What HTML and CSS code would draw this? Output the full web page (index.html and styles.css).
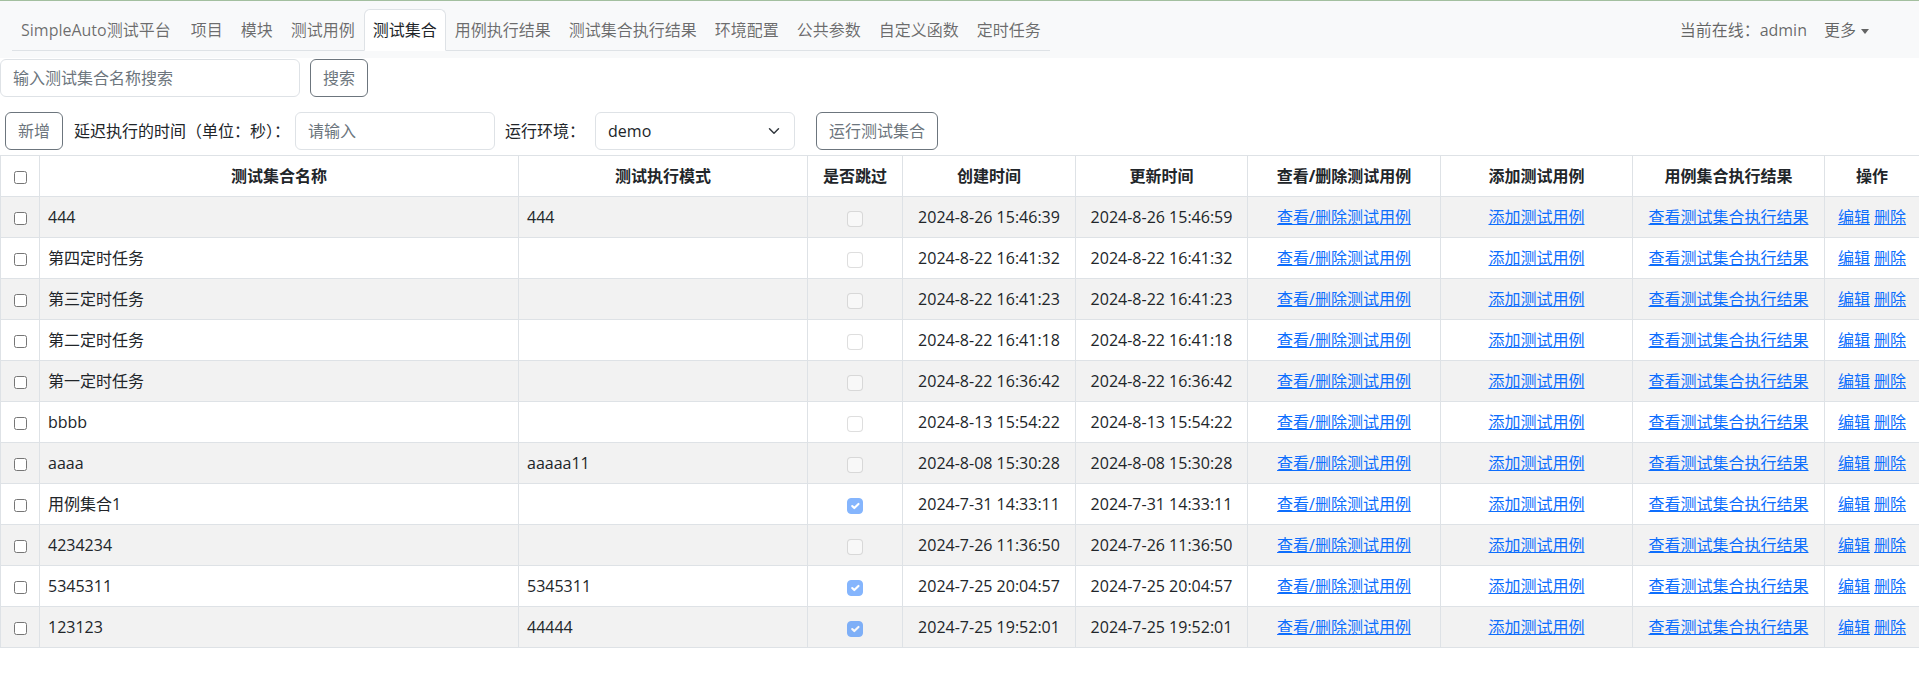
FILE: index.html
```html
<!DOCTYPE html>
<html lang="zh-CN">
<head>
<meta charset="utf-8">
<title>SimpleAuto测试平台</title>
<link rel="stylesheet" href="styles.css">
</head>
<body>
<nav class="navbar">
  <ul class="tabs">
    <li><a class="tab brand">SimpleAuto测试平台</a></li>
    <li><a class="tab">项目</a></li>
    <li><a class="tab">模块</a></li>
    <li><a class="tab">测试用例</a></li>
    <li><a class="tab active">测试集合</a></li>
    <li><a class="tab">用例执行结果</a></li>
    <li><a class="tab">测试集合执行结果</a></li>
    <li><a class="tab">环境配置</a></li>
    <li><a class="tab">公共参数</a></li>
    <li><a class="tab">自定义函数</a></li>
    <li><a class="tab">定时任务</a></li>
  </ul>
  <div class="nav-right">
    <span class="online">当前在线：admin</span>
    <a class="more">更多</a>
  </div>
</nav>

<div class="search-row">
  <input class="form-input search-input" type="text" placeholder="输入测试集合名称搜索">
  <button class="btn">搜索</button>
</div>

<div class="action-row">
  <button class="btn">新增</button>
  <span class="label label-delay">延迟执行的时间（单位：秒）：</span>
  <input class="form-input small-input" type="text" placeholder="请输入">
  <span class="label label-env">运行环境：</span>
  <select class="form-select"><option>demo</option></select>
  <button class="btn run-btn">运行测试集合</button>
</div>

<table class="grid">
  <colgroup>
    <col class="w-check">
    <col class="w-name">
    <col class="w-mode">
    <col class="w-skip">
    <col class="w-time">
    <col class="w-time2">
    <col class="w-view">
    <col class="w-add">
    <col class="w-result">
    <col class="w-op">
  </colgroup>
  <thead>
    <tr>
      <th><input type="checkbox" class="native-check"></th>
      <th>测试集合名称</th>
      <th>测试执行模式</th>
      <th>是否跳过</th>
      <th>创建时间</th>
      <th>更新时间</th>
      <th>查看/删除测试用例</th>
      <th>添加测试用例</th>
      <th>用例集合执行结果</th>
      <th>操作</th>
    </tr>
  </thead>
  <tbody>
    <tr>
      <td class="c"><input type="checkbox" class="native-check"></td>
      <td>444</td><td>444</td>
      <td class="c"><input type="checkbox" class="skip-check" disabled></td>
      <td class="c">2024-8-26 15:46:39</td><td class="c">2024-8-26 15:46:59</td>
      <td class="c"><a class="link">查看/删除测试用例</a></td>
      <td class="c"><a class="link">添加测试用例</a></td>
      <td class="c"><a class="link">查看测试集合执行结果</a></td>
      <td class="c"><a class="link">编辑</a> <a class="link">删除</a></td>
    </tr>
    <tr>
      <td class="c"><input type="checkbox" class="native-check"></td>
      <td>第四定时任务</td><td></td>
      <td class="c"><input type="checkbox" class="skip-check" disabled></td>
      <td class="c">2024-8-22 16:41:32</td><td class="c">2024-8-22 16:41:32</td>
      <td class="c"><a class="link">查看/删除测试用例</a></td>
      <td class="c"><a class="link">添加测试用例</a></td>
      <td class="c"><a class="link">查看测试集合执行结果</a></td>
      <td class="c"><a class="link">编辑</a> <a class="link">删除</a></td>
    </tr>
    <tr>
      <td class="c"><input type="checkbox" class="native-check"></td>
      <td>第三定时任务</td><td></td>
      <td class="c"><input type="checkbox" class="skip-check" disabled></td>
      <td class="c">2024-8-22 16:41:23</td><td class="c">2024-8-22 16:41:23</td>
      <td class="c"><a class="link">查看/删除测试用例</a></td>
      <td class="c"><a class="link">添加测试用例</a></td>
      <td class="c"><a class="link">查看测试集合执行结果</a></td>
      <td class="c"><a class="link">编辑</a> <a class="link">删除</a></td>
    </tr>
    <tr>
      <td class="c"><input type="checkbox" class="native-check"></td>
      <td>第二定时任务</td><td></td>
      <td class="c"><input type="checkbox" class="skip-check" disabled></td>
      <td class="c">2024-8-22 16:41:18</td><td class="c">2024-8-22 16:41:18</td>
      <td class="c"><a class="link">查看/删除测试用例</a></td>
      <td class="c"><a class="link">添加测试用例</a></td>
      <td class="c"><a class="link">查看测试集合执行结果</a></td>
      <td class="c"><a class="link">编辑</a> <a class="link">删除</a></td>
    </tr>
    <tr>
      <td class="c"><input type="checkbox" class="native-check"></td>
      <td>第一定时任务</td><td></td>
      <td class="c"><input type="checkbox" class="skip-check" disabled></td>
      <td class="c">2024-8-22 16:36:42</td><td class="c">2024-8-22 16:36:42</td>
      <td class="c"><a class="link">查看/删除测试用例</a></td>
      <td class="c"><a class="link">添加测试用例</a></td>
      <td class="c"><a class="link">查看测试集合执行结果</a></td>
      <td class="c"><a class="link">编辑</a> <a class="link">删除</a></td>
    </tr>
    <tr>
      <td class="c"><input type="checkbox" class="native-check"></td>
      <td>bbbb</td><td></td>
      <td class="c"><input type="checkbox" class="skip-check" disabled></td>
      <td class="c">2024-8-13 15:54:22</td><td class="c">2024-8-13 15:54:22</td>
      <td class="c"><a class="link">查看/删除测试用例</a></td>
      <td class="c"><a class="link">添加测试用例</a></td>
      <td class="c"><a class="link">查看测试集合执行结果</a></td>
      <td class="c"><a class="link">编辑</a> <a class="link">删除</a></td>
    </tr>
    <tr>
      <td class="c"><input type="checkbox" class="native-check"></td>
      <td>aaaa</td><td>aaaaa11</td>
      <td class="c"><input type="checkbox" class="skip-check" disabled></td>
      <td class="c">2024-8-08 15:30:28</td><td class="c">2024-8-08 15:30:28</td>
      <td class="c"><a class="link">查看/删除测试用例</a></td>
      <td class="c"><a class="link">添加测试用例</a></td>
      <td class="c"><a class="link">查看测试集合执行结果</a></td>
      <td class="c"><a class="link">编辑</a> <a class="link">删除</a></td>
    </tr>
    <tr>
      <td class="c"><input type="checkbox" class="native-check"></td>
      <td>用例集合1</td><td></td>
      <td class="c"><input type="checkbox" class="skip-check" checked disabled></td>
      <td class="c">2024-7-31 14:33:11</td><td class="c">2024-7-31 14:33:11</td>
      <td class="c"><a class="link">查看/删除测试用例</a></td>
      <td class="c"><a class="link">添加测试用例</a></td>
      <td class="c"><a class="link">查看测试集合执行结果</a></td>
      <td class="c"><a class="link">编辑</a> <a class="link">删除</a></td>
    </tr>
    <tr>
      <td class="c"><input type="checkbox" class="native-check"></td>
      <td>4234234</td><td></td>
      <td class="c"><input type="checkbox" class="skip-check" disabled></td>
      <td class="c">2024-7-26 11:36:50</td><td class="c">2024-7-26 11:36:50</td>
      <td class="c"><a class="link">查看/删除测试用例</a></td>
      <td class="c"><a class="link">添加测试用例</a></td>
      <td class="c"><a class="link">查看测试集合执行结果</a></td>
      <td class="c"><a class="link">编辑</a> <a class="link">删除</a></td>
    </tr>
    <tr>
      <td class="c"><input type="checkbox" class="native-check"></td>
      <td>5345311</td><td>5345311</td>
      <td class="c"><input type="checkbox" class="skip-check" checked disabled></td>
      <td class="c">2024-7-25 20:04:57</td><td class="c">2024-7-25 20:04:57</td>
      <td class="c"><a class="link">查看/删除测试用例</a></td>
      <td class="c"><a class="link">添加测试用例</a></td>
      <td class="c"><a class="link">查看测试集合执行结果</a></td>
      <td class="c"><a class="link">编辑</a> <a class="link">删除</a></td>
    </tr>
    <tr>
      <td class="c"><input type="checkbox" class="native-check"></td>
      <td>123123</td><td>44444</td>
      <td class="c"><input type="checkbox" class="skip-check" checked disabled></td>
      <td class="c">2024-7-25 19:52:01</td><td class="c">2024-7-25 19:52:01</td>
      <td class="c"><a class="link">查看/删除测试用例</a></td>
      <td class="c"><a class="link">添加测试用例</a></td>
      <td class="c"><a class="link">查看测试集合执行结果</a></td>
      <td class="c"><a class="link">编辑</a> <a class="link">删除</a></td>
    </tr>
  </tbody>
</table>
</body>
</html>
```

FILE: styles.css
```css
* { box-sizing: border-box; }

html, body {
  margin: 0;
  padding: 0;
  background: #fff;
}

body {
  font-family: "Open Sans", "Noto Sans CJK SC", sans-serif;
  font-size: 16px;
  line-height: 24px;
  color: #212529;
}

/* ---------- navbar ---------- */
.navbar {
  display: flex;
  align-items: flex-start;
  background: #f8f9fa;
  border-top: 1px solid #a3bf9f;
  padding: 8px 0 6px 12px;
  height: 58px;
}

.tabs {
  display: flex;
  margin: 0;
  padding: 0;
  list-style: none;
  border-bottom: 1px solid #dee2e6;
}

.tab {
  display: block;
  padding: 8px;
  border: 1px solid transparent;
  border-radius: 6px 6px 0 0;
  margin-bottom: -1px;
  color: rgba(0, 0, 0, 0.58);
  white-space: nowrap;
  cursor: pointer;
}

.tab.brand { padding-right: 10px; }

.tab.active {
  color: #212529;
  background: #fff;
  border-color: #dee2e6 #dee2e6 #fff;
}

.nav-right {
  margin-left: auto;
  display: flex;
  align-items: center;
  gap: 17px;
  height: 42px;
  padding-right: 50px;
  color: rgba(0, 0, 0, 0.6);
}

.more {
  display: flex;
  align-items: center;
  cursor: pointer;
}

.more::after {
  content: "";
  display: inline-block;
  margin-left: 5px;
  margin-top: 2px;
  border-top: 5px solid rgba(0, 0, 0, 0.6);
  border-left: 4px solid transparent;
  border-right: 4px solid transparent;
}

/* ---------- forms ---------- */
.search-row {
  display: flex;
  align-items: center;
  gap: 10px;
  margin-top: 1px;
}

.action-row {
  display: flex;
  align-items: center;
  margin-top: 15px;
  padding-left: 5px;
}

.form-input {
  height: 38px;
  padding: 6px 12px;
  font: inherit;
  color: #212529;
  background: #fff;
  border: 1px solid #dee2e6;
  border-radius: 6px;
  outline: none;
}

.form-input::placeholder {
  color: #6c757d;
}

.search-input { width: 300px; }
.small-input { width: 200px; margin-left: 5px; }

.btn {
  height: 38px;
  padding: 6px 12px;
  font: inherit;
  color: #6c757d;
  background: transparent;
  border: 1px solid #6c757d;
  border-radius: 6px;
  cursor: pointer;
  white-space: nowrap;
}

.label { white-space: nowrap; }
.label-delay { margin-left: 11px; }
.label-env { margin-left: 10px; }

.form-select {
  width: 200px;
  height: 38px;
  margin-left: 10px;
  padding: 6px 36px 6px 12px;
  font: inherit;
  color: #212529;
  border: 1px solid #dee2e6;
  border-radius: 6px;
  appearance: none;
  -webkit-appearance: none;
  background-color: #fff;
  background-image: url("data:image/svg+xml,%3csvg xmlns='http://www.w3.org/2000/svg' viewBox='0 0 16 16'%3e%3cpath fill='none' stroke='%23343a40' stroke-linecap='round' stroke-linejoin='round' stroke-width='2' d='m2 5 6 6 6-6'/%3e%3c/svg%3e");
  background-repeat: no-repeat;
  background-position: right 12px center;
  background-size: 16px 12px;
  outline: none;
}

.run-btn { margin-left: 21px; }

/* ---------- table ---------- */
.grid {
  width: 100%;
  margin-top: 5px;
  border-collapse: collapse;
  table-layout: fixed;
}

.w-check { width: 39px; }
.w-name { width: 479px; }
.w-mode { width: 289px; }
.w-skip { width: 95px; }
.w-time { width: 173px; }
.w-time2 { width: 172px; }
.w-view { width: 193px; }
.w-add { width: 192px; }
.w-result { width: 192px; }
.w-op { width: 95px; }

.grid th,
.grid td {
  border: 1px solid #dee2e6;
  padding: 8px;
  height: 41px;
  white-space: nowrap;
  vertical-align: middle;
}

.grid th {
  font-weight: 700;
  text-align: center;
  background: #fff;
}

.grid td { text-align: left; }
.grid td.c { text-align: center; }

.grid tbody tr:nth-child(odd) td { background: #f2f2f2; }

.native-check {
  margin: 0;
  width: 13px;
  height: 13px;
  vertical-align: middle;
}

.skip-check {
  appearance: none;
  -webkit-appearance: none;
  width: 16px;
  height: 16px;
  margin: 0;
  vertical-align: middle;
  background-color: #fff;
  border: 1px solid rgba(0, 0, 0, 0.25);
  border-radius: 4px;
  opacity: 0.5;
}

.skip-check:checked {
  background-color: #0d6efd;
  border-color: #0d6efd;
  background-image: url("data:image/svg+xml,%3csvg xmlns='http://www.w3.org/2000/svg' viewBox='0 0 20 20'%3e%3cpath fill='none' stroke='%23fff' stroke-linecap='round' stroke-linejoin='round' stroke-width='3' d='m6 10 3 3 6-6'/%3e%3c/svg%3e");
  background-size: 100% 100%;
}

.link {
  color: #0d6efd;
  text-decoration: underline;
  cursor: pointer;
}
```
